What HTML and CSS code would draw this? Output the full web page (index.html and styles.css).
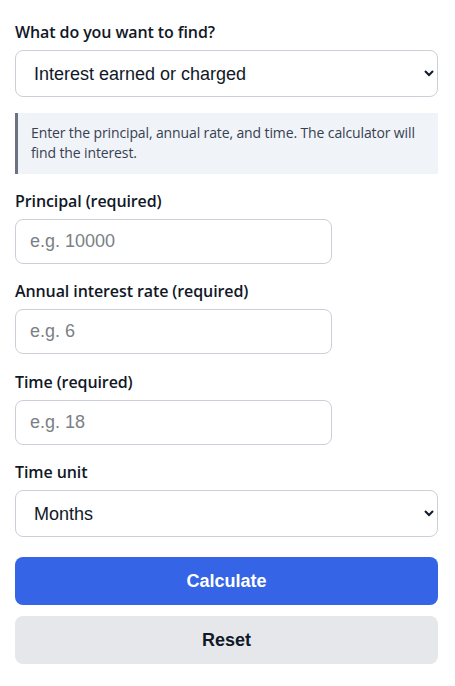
FILE: index.html
```html
<!DOCTYPE html>
<html lang="en">
<head>
    <meta charset="UTF-8">
    <meta name="viewport" content="width=device-width, initial-scale=1.0">
    <title>Interest Calculator</title>
    <link rel="stylesheet" href="styles.css">
</head>
<body>
    <form class="calc-form" onsubmit="return false">
        <div class="field">
            <label for="mode">What do you want to find?</label>
            <select id="mode" class="select-input">
                <option>Interest earned or charged</option>
                <option>Principal</option>
                <option>Annual rate</option>
                <option>Time</option>
            </select>
        </div>

        <div class="hint">
            Enter the principal, annual rate, and time. The calculator will find the interest.
        </div>

        <div class="field">
            <label for="principal">Principal (required)</label>
            <input id="principal" class="text-input" type="text" placeholder="e.g. 10000">
        </div>

        <div class="field">
            <label for="rate">Annual interest rate (required)</label>
            <input id="rate" class="text-input" type="text" placeholder="e.g. 6">
        </div>

        <div class="field field-time">
            <label for="time">Time (required)</label>
            <input id="time" class="text-input" type="text" placeholder="e.g. 18">
        </div>

        <div class="field">
            <label for="unit">Time unit</label>
            <select id="unit" class="select-input">
                <option>Months</option>
                <option>Years</option>
                <option>Days</option>
            </select>
        </div>

        <div class="actions">
            <button type="submit" class="btn btn-primary">Calculate</button>
            <button type="reset" class="btn btn-secondary">Reset</button>
        </div>
    </form>
</body>
</html>
```

FILE: styles.css
```css
* {
    margin: 0;
    padding: 0;
    box-sizing: border-box;
}

body {
    font-family: 'Open Sans', 'Noto Sans', sans-serif;
    background: #ffffff;
    color: #111827;
}

.calc-form {
    padding: 21px 17px 20px 15px;
    display: flex;
    flex-direction: column;
    gap: 16px;
}

.field {
    display: flex;
    flex-direction: column;
    gap: 6px;
}

.field-time {
    padding-top: 1px;
}

.field label {
    font-size: 16px;
    font-weight: 600;
    line-height: 23px;
    letter-spacing: -0.1px;
    color: #111827;
}

.select-input,
.text-input {
    font-family: 'Liberation Sans', Arial, sans-serif;
    font-size: 18px;
    color: #111827;
    background: #ffffff;
    border: 1px solid #cbd0d8;
    border-radius: 8px;
}

.select-input {
    width: 100%;
    height: 47px;
    padding: 0 4px 0 14px;
}

.text-input {
    width: 75%;
    height: 45px;
    padding: 0 14px;
}

.text-input::placeholder {
    color: #7b7f86;
}

.hint {
    background: #f0f3f8;
    border-left: 3px solid #6b7280;
    padding: 10px 12px 11px 13px;
    font-size: 14px;
    line-height: 20px;
    letter-spacing: -0.12px;
    color: #374151;
}

.actions {
    display: flex;
    flex-direction: column;
    gap: 11px;
    margin-top: 4px;
}

.btn {
    height: 48px;
    border: none;
    border-radius: 8px;
    font-family: 'Liberation Sans', Arial, sans-serif;
    font-size: 18px;
    font-weight: 700;
    cursor: pointer;
}

.btn-primary {
    background: #3565e6;
    color: #ffffff;
}

.btn-secondary {
    background: #e5e7eb;
    color: #111827;
}
```
